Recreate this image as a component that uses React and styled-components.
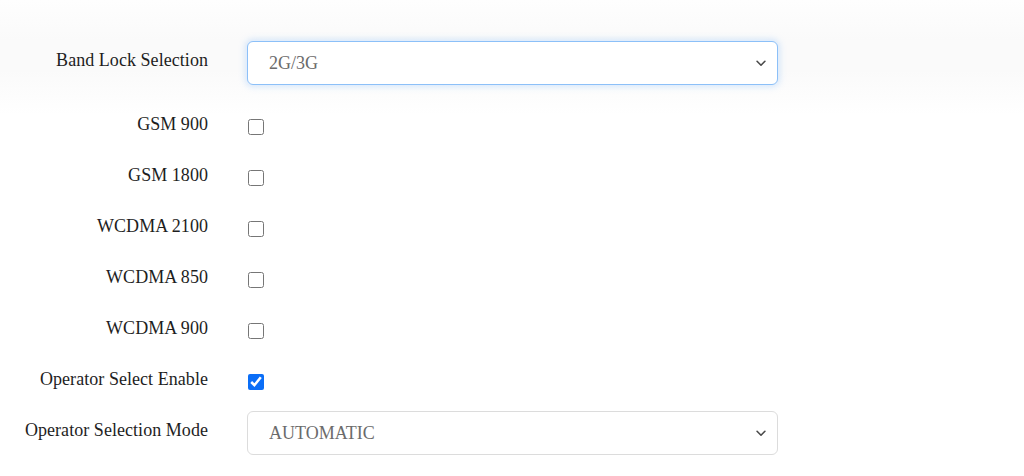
import React from "react";
import styled, { createGlobalStyle } from "styled-components";

const Global = createGlobalStyle`
  html, body { margin: 0; padding: 0; }
  body {
    background: linear-gradient(to bottom, #fefefe 0px, #fafafa 40px, #fafafa 70px, #ffffff 115px, #ffffff 100%);
    font-family: "Liberation Serif", "Times New Roman", serif;
    color: #222;
    min-height: 476px;
  }
`;

const Form = styled.div`
  padding-top: 37px;
  display: flex;
  flex-direction: column;
`;

const Row = styled.div`
  display: grid;
  grid-template-columns: 208px 531px;
  column-gap: 39px;
  align-items: center;
  height: 51px;
  margin-bottom: ${(p) => (p.$first ? "13px" : "0")};
`;

const Label = styled.label`
  text-align: right;
  font-size: 18px;
  line-height: 22px;
  color: #1e1e1e;
  white-space: nowrap;
  margin-top: -5px;
  letter-spacing: 0.05px;
`;

const SelectWrap = styled.div`
  position: relative;
  height: 44px;
`;

const Select = styled.select`
  appearance: none;
  -webkit-appearance: none;
  width: 100%;
  height: 44px;
  box-sizing: border-box;
  padding: 0 40px 0 21px;
  font-family: "Liberation Serif", "Times New Roman", serif;
  font-size: 18px;
  color: #6b6b6b;
  background: #fff;
  border: 1px solid ${(p) => (p.$focused ? "#8cc0f8" : "#dcdcdc")};
  border-radius: 6px;
  box-shadow: ${(p) => (p.$focused ? "0 0 6px 2px rgba(120, 180, 250, 0.28)" : "none")};
  outline: none;
`;

const Chevron = styled.svg`
  position: absolute;
  right: 10px;
  top: 50%;
  width: 14px;
  height: 14px;
  margin-top: -7px;
  pointer-events: none;
`;

const Check = styled.input.attrs({ type: "checkbox" })`
  width: 16px;
  height: 16px;
  margin: 0 0 0 1px;
  accent-color: #0b6ef7;
`;

const CheckCell = styled.div`
  display: flex;
  align-items: center;
  height: 100%;
`;

function Dropdown({ value, focused }) {
  return (
    <SelectWrap>
      <Select $focused={focused} defaultValue={value}>
        <option>{value}</option>
      </Select>
      <Chevron viewBox="0 0 16 16">
        <path d="M3.5 6l4.5 4.5 4.5-4.5" fill="none" stroke="#4a4a4a" strokeWidth="1.8" strokeLinecap="round" strokeLinejoin="round" />
      </Chevron>
    </SelectWrap>
  );
}

const bands = ["GSM 900", "GSM 1800", "WCDMA 2100", "WCDMA 850", "WCDMA 900"];

export default function App() {
  return (
    <>
      <Global />
      <Form>
        <Row $first>
          <Label>Band Lock Selection</Label>
          <Dropdown value="2G/3G" focused />
        </Row>
        {bands.map((b) => (
          <Row key={b}>
            <Label>{b}</Label>
            <CheckCell>
              <Check />
            </CheckCell>
          </Row>
        ))}
        <Row>
          <Label>Operator Select Enable</Label>
          <CheckCell>
            <Check defaultChecked />
          </CheckCell>
        </Row>
        <Row>
          <Label>Operator Selection Mode</Label>
          <Dropdown value="AUTOMATIC" />
        </Row>
      </Form>
    </>
  );
}
